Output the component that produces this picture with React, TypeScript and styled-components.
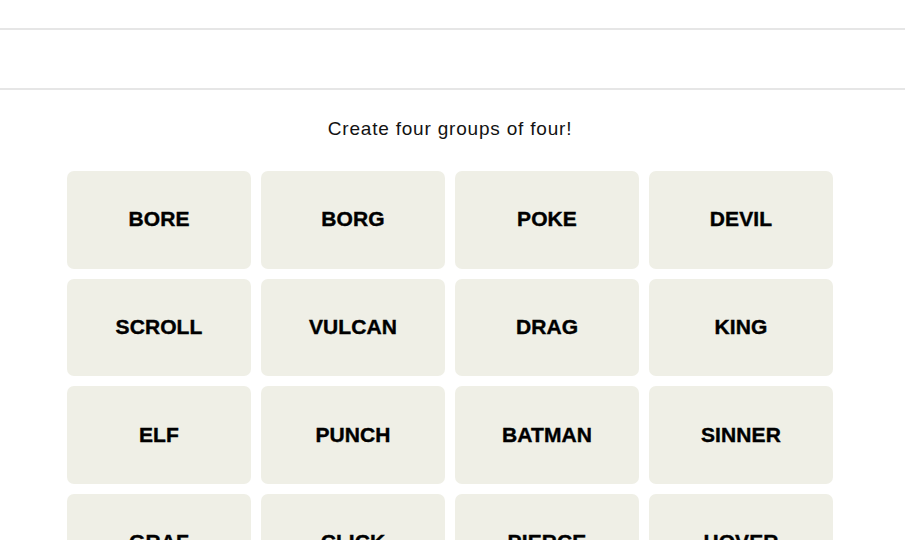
import React from "react";
import styled, { createGlobalStyle } from "styled-components";

const GlobalStyle = createGlobalStyle`
  html, body {
    margin: 0;
    padding: 0;
    background: #ffffff;
    font-family: "Liberation Sans", Arial, sans-serif;
    color: #000000;
  }
`;

const Page = styled.div`
  display: flex;
  flex-direction: column;
  width: 100%;
  height: 540px;
  overflow: hidden;
`;

const TopBar = styled.div`
  flex-shrink: 0;
  height: 28px;
  border-bottom: 2px solid #e6e6e6;
`;

const ToolBar = styled.div`
  flex-shrink: 0;
  height: 58px;
  border-bottom: 2px solid #e6e6e6;
`;

const Main = styled.main`
  flex-shrink: 0;
  display: flex;
  flex-direction: column;
  align-items: center;
  padding: 27px 5px 0 0;
  gap: 30px;
`;

const Prompt = styled.p`
  margin: 0;
  font-size: 19px;
  line-height: 24px;
  letter-spacing: 0.8px;
  font-weight: 400;
  color: #121212;
`;

const Grid = styled.div`
  display: grid;
  grid-template-columns: repeat(4, 184px);
  grid-auto-rows: 97.7px;
  gap: 10px 10px;
`;

const Tile = styled.button`
  display: flex;
  align-items: center;
  justify-content: center;
  border: none;
  border-radius: 7px;
  background: #efefe6;
  font-family: "Liberation Sans", Arial, sans-serif;
  font-weight: 700;
  font-size: 21px;
  letter-spacing: 0.1px;
  -webkit-text-stroke: 0.4px #000000;
  color: #000000;
  text-transform: uppercase;
  padding: 0 0 1px 0;
  cursor: pointer;
`;

const words = [
  "BORE", "BORG", "POKE", "DEVIL",
  "SCROLL", "VULCAN", "DRAG", "KING",
  "ELF", "PUNCH", "BATMAN", "SINNER",
  "GRAF", "CLICK", "PIERCE", "HOVER",
];

export default function App() {
  return (
    <Page>
      <GlobalStyle />
      <TopBar />
      <ToolBar />
      <Main>
        <Prompt>Create four groups of four!</Prompt>
        <Grid>
          {words.map((w) => (
            <Tile key={w}>{w}</Tile>
          ))}
        </Grid>
      </Main>
    </Page>
  );
}
